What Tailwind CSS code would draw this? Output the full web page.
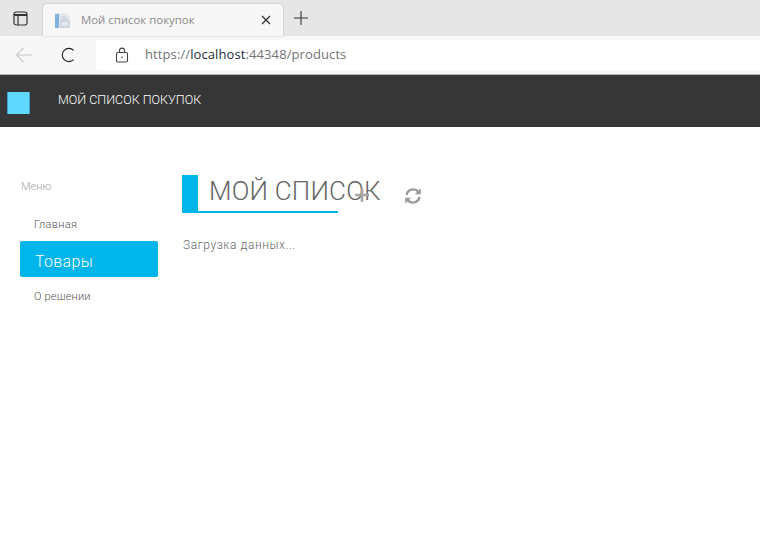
<!DOCTYPE html>
<html lang="ru">
<head>
<meta charset="utf-8">
<title>Мой список покупок</title>
<script src="https://cdn.jsdelivr.net/npm/@tailwindcss/browser@4"></script>
</head>
<body class="bg-white h-[539px] overflow-hidden font-['Roboto',sans-serif]">
    <!-- browser tab strip -->
    <div class="h-[36px] bg-[#e6e6e6] flex items-end">
        <div class="w-[40px] h-[36px] flex items-center justify-center">
            <svg width="15" height="15" viewBox="0 0 15 15" fill="none" stroke="#333" stroke-width="1.2">
                <rect x="1" y="1" width="13" height="13" rx="2.2"/>
                <path d="M1 4h13" stroke-width="2"/>
                <path d="M5 4.5V14"/>
            </svg>
        </div>
        <div class="ml-[3px] w-[240px] h-[32px] bg-[#f7f7f7] rounded-t-[4px] flex items-center pl-[11px] pr-[12px] shadow-[0_0_2px_rgba(0,0,0,0.25)]">
            <svg width="17" height="17" viewBox="0 0 17 17" class="shrink-0">
                <path d="M1 1h11l4 4v11H1z" fill="#e3e8f0"/>
                <rect x="1" y="2" width="4" height="14" fill="#7fb2de"/>
                <rect x="7" y="9" width="8" height="6" fill="none" stroke="#bcc4cf"/>
                <path d="M7 5h5M7 7h7" stroke="#c5ccd6"/>
            </svg>
            <span class="ml-[10px] text-[11.4px] text-[#8a8a8a] font-['Open_Sans',sans-serif]">Мой список покупок</span>
            <svg class="ml-auto" width="10" height="10" viewBox="0 0 10 10" stroke="#333" stroke-width="1.3"><path d="M1 1l8 8M9 1l-8 8"/></svg>
        </div>
        <div class="w-[36px] h-[36px] flex items-center justify-center">
            <svg width="16" height="16" viewBox="0 0 16 16" stroke="#333" stroke-width="1.1"><path d="M8 1v14M1 8h14"/></svg>
        </div>
    </div>

    <!-- browser toolbar -->
    <div class="h-[38px] bg-[#f7f7f7] border-b border-[#b5b5b5] flex items-center box-content">
        <div class="w-[48px] flex justify-center">
            <svg width="18" height="16" viewBox="0 0 18 16" fill="none" stroke="#c8c8c8" stroke-width="1.1"><path d="M17 8H1.5M8.5 1L1.5 8l7 7"/></svg>
        </div>
        <div class="w-[48px] pr-[8px] flex justify-center">
            <svg width="14" height="16" viewBox="0 0 14 16" fill="none" stroke="#222" stroke-width="1.1"><path d="M12.6 3.4A6.6 6.6 0 1 0 12.6 12.6"/></svg>
        </div>
        <div class="flex-1 h-[30px] bg-white rounded-l-[4px] flex items-center pl-[19px]">
            <svg width="14" height="16" viewBox="0 0 14 16" fill="none" stroke="#444" stroke-width="1.1">
                <rect x="1.5" y="5.5" width="11" height="9.5" rx="1.5"/>
                <path d="M4.5 5.5V3.6a2.5 2.5 0 0 1 5 0v1.9"/>
                <circle cx="7" cy="10.2" r="0.8" fill="#444" stroke="none"/>
            </svg>
            <span class="ml-[16px] text-[13px] tracking-[0.1px] text-[#6f7478] font-['Open_Sans',sans-serif]">https://<span class="text-[#1c2a3a]">localhost</span>:44348/products</span>
        </div>
    </div>

    <!-- app header -->
    <header class="h-[52px] bg-[#363636] flex items-center">
        <div class="ml-[7px] mt-[3px] w-[23px] h-[22px] bg-[#61d9ff] border-l border-r border-[#3f9fd0]"></div>
        <span class="ml-[28px] mb-[2px] text-[12.5px] text-white font-light">МОЙ СПИСОК ПОКУПОК</span>
    </header>

    <div class="flex">
        <!-- side menu -->
        <nav class="w-[182px] shrink-0 pl-[20px] pt-[53px]">
            <div class="pl-[1px] text-[11px] leading-[13px] text-[#a3a3a3] font-light">Меню</div>
            <ul class="mt-[12px] w-[138px]">
                <li class="h-[36px] pl-[14px] pt-[4px] flex items-center text-[11px] tracking-[0.3px] font-light text-[#555]">Главная</li>
                <li class="h-[36px] pl-[15px] pt-[5px] flex items-center text-[16px] tracking-[0.3px] font-light text-white bg-[#00b5e9] rounded-[2px]">Товары</li>
                <li class="h-[36px] pl-[14px] pt-[4px] flex items-center text-[11px] tracking-[0.2px] font-light text-[#555]">О решении</li>
            </ul>
        </nav>

        <main class="pt-[48px]">
            <div class="flex items-center">
                <h1 class="w-[156px] h-[38px] shrink-0 border-l-[16px] border-b-[2px] border-[#00b5e9] pl-[11px] text-[26px] tracking-[0.2px] leading-[32px] font-light text-[#666] whitespace-nowrap">МОЙ СПИСОК</h1>
                <svg class="ml-[17px] mt-[2px] shrink-0" width="14" height="14" viewBox="0 0 14 14" stroke="#a8a8a8" stroke-width="2.6"><path d="M7 0v14M0 7h14"/></svg>
                <svg class="ml-[35px] mt-[3px] shrink-0" width="18" height="18" viewBox="0 0 18 18" fill="none" stroke="#9a9a9a" stroke-width="2.4">
                    <path d="M2.5 8A6.8 6.8 0 0 1 14.5 5"/>
                    <path d="M15.5 10A6.8 6.8 0 0 1 3.5 13"/>
                    <path d="M16.8 1.2v6h-6z" fill="#9a9a9a" stroke="none"/>
                    <path d="M1.2 16.8v-6h6z" fill="#9a9a9a" stroke="none"/>
                </svg>
            </div>
            <p class="mt-[23px] pl-[1px] text-[12px] tracking-[0.55px] font-light text-[#666]">Загрузка данных...</p>
        </main>
    </div>
</body>
</html>
